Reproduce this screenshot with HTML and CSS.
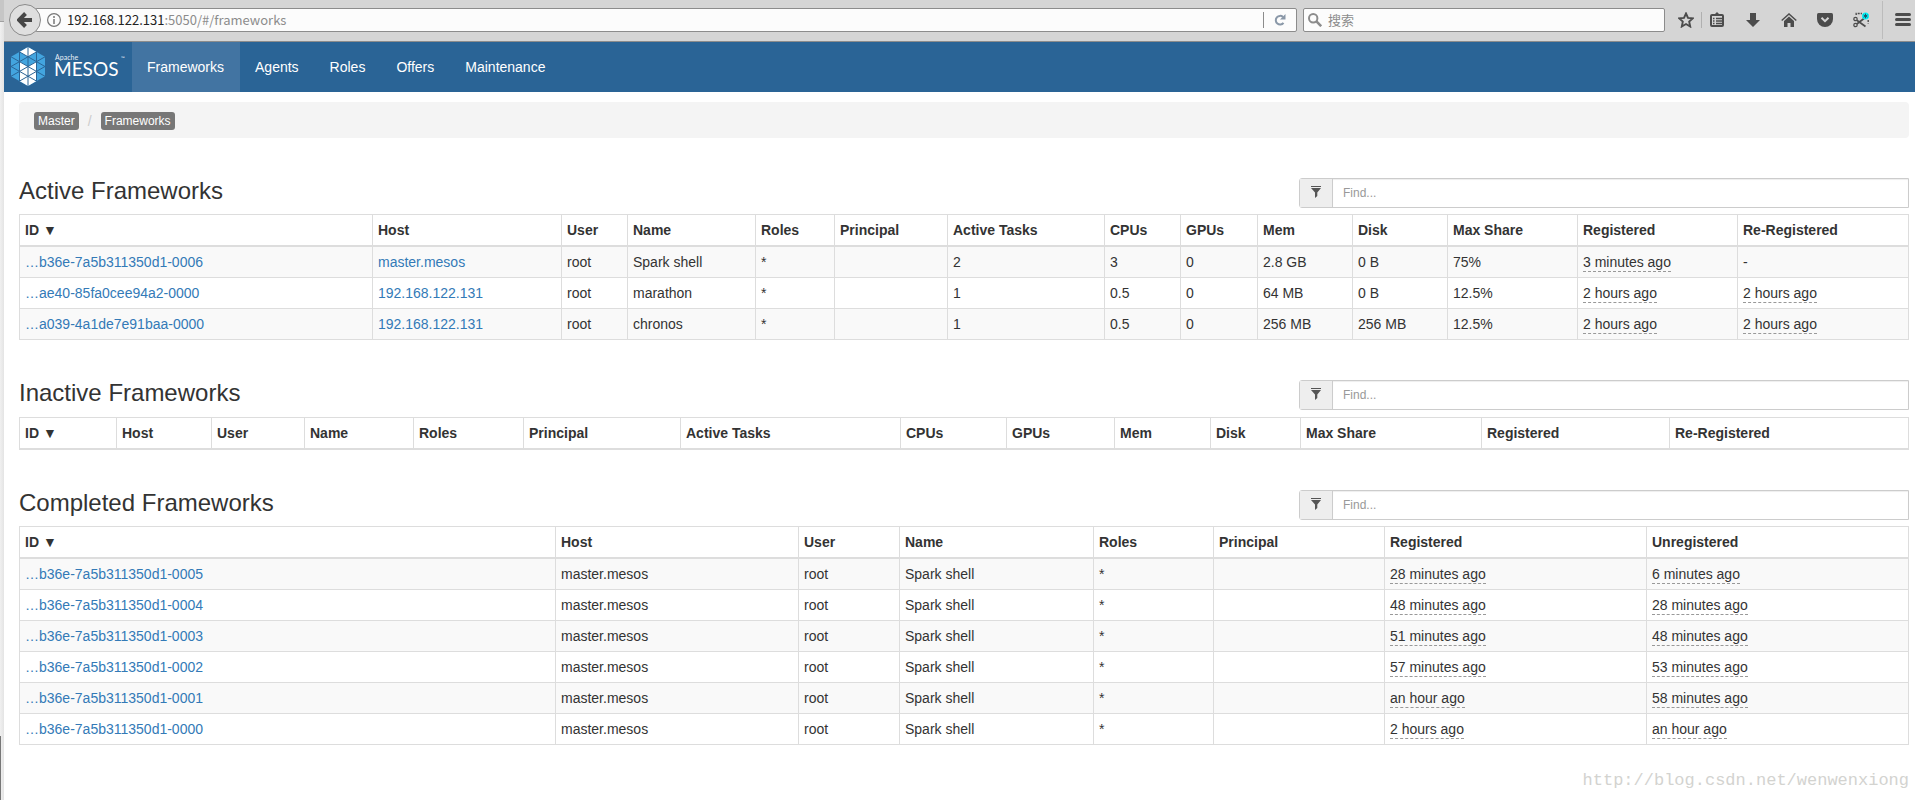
FILE: index.html
```
<!DOCTYPE html>
<html lang="en">
<head>
<meta charset="utf-8">
<title>Mesos Frameworks</title>
<link rel="stylesheet" href="styles.css">
</head>
<body>
<div class="window">
<aside class="edge"><div class="edge-top"></div><div class="edge-middle"></div><div class="edge-bottom"></div></aside>
<div class="browser">
<header class="toolbar">
  <button class="back" type="button" aria-label="Back"><svg width="16" height="16" viewBox="0 0 16 16"><path d="M8.500 1.500L2 8l6.500 6.500M2.500 8H15" fill="none" stroke="#474747" stroke-width="4"/></svg></button>
  <div class="address">
    <svg class="info" width="14" height="14" viewBox="0 0 14 14"><circle cx="7" cy="7" r="6.400" fill="none" stroke="#777" stroke-width="1.200"/><path d="M7 6v5M7 3v2" stroke="#777" stroke-width="1.500"/></svg>
    <span class="url"><span class="url-host">192.168.122.131</span>:5050/#/frameworks</span>
    <button class="reload" type="button" aria-label="Reload"><svg width="12" height="12" viewBox="0 0 12 12"><path d="M9.500 8.800A4.300 4.300 0 1 1 9 3" fill="none" stroke="#8a98a8" stroke-width="2"/><path d="M11.500 0v5.500H6z" fill="#8a98a8"/></svg></button>
  </div>
  <label class="search">
    <svg width="14" height="14" viewBox="0 0 14 14"><circle cx="5.200" cy="5.200" r="4.200" fill="none" stroke="#8c8c8c" stroke-width="2"/><path d="M8.200 8.200l5 5" stroke="#8c8c8c" stroke-width="2.600"/></svg>
    <input class="search-input" type="text" placeholder="搜索" aria-label="搜索">
  </label>
  <div class="tools">
    <button class="tool" type="button" aria-label="Bookmark"><svg width="16" height="16" viewBox="0 0 16 16"><path d="M8 1.500l2 4.400 4.700.5-3.500 3.200 1 4.900L8 12l-4.200 2.500 1-4.900L1.300 6.400 6 5.900z" fill="none" stroke="#4c4c4c" stroke-width="1.900"/></svg></button>
    <span class="divider"></span>
    <button class="tool" type="button" aria-label="Library"><svg width="14" height="16" viewBox="0 0 14 16"><path d="M7 0l3 3H4z" fill="#4c4c4c"/><rect x="1" y="3" width="12" height="11" rx="1" fill="none" stroke="#4c4c4c" stroke-width="2"/><path d="M3 6.500h1.500M6 6.500h6M3 9h1.500M6 9h6M3 11.500h1.500M6 11.500h6" stroke="#4c4c4c" stroke-width="1.400"/></svg></button>
    <button class="tool" type="button" aria-label="Downloads"><svg width="14" height="14" viewBox="0 0 14 14"><path d="M4 0h6v7h4l-7 7-7-7h4z" fill="#4c4c4c"/></svg></button>
    <button class="tool" type="button" aria-label="Home"><svg width="16" height="14" viewBox="0 0 16 14"><path d="M.7 7.500L8 1l7.300 6.500" fill="none" stroke="#4c4c4c" stroke-width="1.500"/><path d="M3 8l5-4.400L13 8v6H9.500v-4h-3v4H3z" fill="#4c4c4c"/></svg></button>
    <button class="tool" type="button" aria-label="Pocket"><svg width="16" height="14" viewBox="0 0 16 14"><path d="M1.500 0h13Q16 0 16 1.500V6a8 8 0 0 1-16 0V1.500Q0 0 1.500 0z" fill="#4c4c4c"/><path d="M4.500 4.800L8 8.200l3.500-3.400" fill="none" stroke="#d5d5d5" stroke-width="2"/></svg></button>
    <button class="tool" type="button" aria-label="Screenshot"><svg width="16" height="16" viewBox="0 0 16 16"><path d="M3.200 3V1.500H9M15.200 8v3.500" fill="none" stroke="#4c4c4c" stroke-width="1.400" stroke-dasharray="2 1"/><circle cx="2.500" cy="7" r="1.700" fill="none" stroke="#4c4c4c" stroke-width="1.200"/><circle cx="2.500" cy="13" r="1.700" fill="none" stroke="#4c4c4c" stroke-width="1.200"/><path d="M3.800 8.200L12.500 14.500M3.800 12L11 6.500" stroke="#4c4c4c" stroke-width="1.700"/><circle cx="12.500" cy="4" r="3.500" fill="#00f0f5"/><path d="M12.500 1.700v4.600M10.500 2.900l4 2.300M14.500 2.900l-4 2.300" stroke="#17576a" stroke-width="1"/></svg></button>
    <button class="tool tool-menu" type="button" aria-label="Menu"><svg width="16" height="13" viewBox="0 0 16 13"><path d="M1.500 1.500h13M1.500 6.500h13M1.500 11.500h13" stroke="#4c4c4c" stroke-width="3" stroke-linecap="round"/></svg></button>
  </div>
</header>
<nav class="navbar">
  <a class="brand" href="#" aria-label="Apache Mesos">
    <svg width="118" height="42" viewBox="0 0 118 42">
      <path d="M18 1l17 9.800v19.500L18 40 1 30.300V10.800z" fill="#43a5df"/>
      <path d="M18 1l8.500 4.900-8.500 4.900-8.500-4.900zM9.500 15.600l8.500 4.900 8.500-4.900v19.500L18 40l-8.500-4.900z" fill="#fff"/>
      <path d="M18 1v39M9.500 5.900v29.200M26.500 5.900v29.200M1 20.500L26.500 5.900M1 30.300L35 10.800M9.500 35.100L35 20.500M35 20.500L9.500 5.900M35 30.300L1 10.800M26.500 35.100L1 20.500" fill="none" stroke="#2a6496"/>
      <text class="brand-small" x="45" y="14">Apache</text><text class="brand-name" x="44" y="30">MESOS</text><text class="brand-mark" x="111" y="14">™</text>
    </svg>
  </a>
  <a class="nav-link nav-active" href="#">Frameworks</a><a class="nav-link" href="#">Agents</a><a class="nav-link" href="#">Roles</a><a class="nav-link" href="#">Offers</a><a class="nav-link" href="#">Maintenance</a>
</nav>
<main class="content">
  <div class="breadcrumb"><a class="badge" href="#">Master</a><span class="slash">/</span><a class="badge" href="#">Frameworks</a></div>
  <section class="panel">
    <div class="panel-head"><h2 class="title">Active Frameworks</h2>
      <label class="find"><span class="find-icon"><svg width="10" height="12" viewBox="0 0 10 12"><path d="M0 0h10v1H0zM0 2h10L6.300 6.500V10L4 12V6.500z" fill="#555"/></svg></span><input class="find-input" type="text" placeholder="Find..." aria-label="Find active frameworks"></label></div>
    <table class="grid">
      <colgroup><col class="w353"><col class="w189"><col class="w66"><col class="w128"><col class="w79"><col class="w113"><col class="w157"><col class="w76"><col class="w77"><col class="w95"><col class="w95"><col class="w130"><col class="w160"><col class="w171"></colgroup>
      <thead><tr><th>ID ▼</th><th>Host</th><th>User</th><th>Name</th><th>Roles</th><th>Principal</th><th>Active Tasks</th><th>CPUs</th><th>GPUs</th><th>Mem</th><th>Disk</th><th>Max Share</th><th>Registered</th><th>Re-Registered</th></tr></thead>
      <tbody>
        <tr><td><a href="#">…b36e-7a5b311350d1-0006</a></td><td><a href="#">master.mesos</a></td><td>root</td><td>Spark shell</td><td>*</td><td></td><td>2</td><td>3</td><td>0</td><td>2.8 GB</td><td>0 B</td><td>75%</td><td><span class="time">3 minutes ago</span></td><td>-</td></tr>
        <tr><td><a href="#">…ae40-85fa0cee94a2-0000</a></td><td><a href="#">192.168.122.131</a></td><td>root</td><td>marathon</td><td>*</td><td></td><td>1</td><td>0.5</td><td>0</td><td>64 MB</td><td>0 B</td><td>12.5%</td><td><span class="time">2 hours ago</span></td><td><span class="time">2 hours ago</span></td></tr>
        <tr><td><a href="#">…a039-4a1de7e91baa-0000</a></td><td><a href="#">192.168.122.131</a></td><td>root</td><td>chronos</td><td>*</td><td></td><td>1</td><td>0.5</td><td>0</td><td>256 MB</td><td>256 MB</td><td>12.5%</td><td><span class="time">2 hours ago</span></td><td><span class="time">2 hours ago</span></td></tr>
      </tbody>
    </table>
  </section>
  <section class="panel">
    <div class="panel-head"><h2 class="title">Inactive Frameworks</h2>
      <label class="find"><span class="find-icon"><svg width="10" height="12" viewBox="0 0 10 12"><path d="M0 0h10v1H0zM0 2h10L6.300 6.500V10L4 12V6.500z" fill="#555"/></svg></span><input class="find-input" type="text" placeholder="Find..." aria-label="Find inactive frameworks"></label></div>
    <table class="grid grid-empty">
      <colgroup><col class="w97"><col class="w95"><col class="w93"><col class="w109"><col class="w110"><col class="w157"><col class="w220"><col class="w106"><col class="w108"><col class="w96"><col class="w90"><col class="w181"><col class="w188"><col class="w239"></colgroup>
      <thead><tr><th>ID ▼</th><th>Host</th><th>User</th><th>Name</th><th>Roles</th><th>Principal</th><th>Active Tasks</th><th>CPUs</th><th>GPUs</th><th>Mem</th><th>Disk</th><th>Max Share</th><th>Registered</th><th>Re-Registered</th></tr></thead>
    </table>
  </section>
  <section class="panel">
    <div class="panel-head"><h2 class="title">Completed Frameworks</h2>
      <label class="find"><span class="find-icon"><svg width="10" height="12" viewBox="0 0 10 12"><path d="M0 0h10v1H0zM0 2h10L6.300 6.500V10L4 12V6.500z" fill="#555"/></svg></span><input class="find-input" type="text" placeholder="Find..." aria-label="Find completed frameworks"></label></div>
    <table class="grid">
      <colgroup><col class="w536"><col class="w243"><col class="w101"><col class="w194"><col class="w120"><col class="w171"><col class="w262"><col class="w262"></colgroup>
      <thead><tr><th>ID ▼</th><th>Host</th><th>User</th><th>Name</th><th>Roles</th><th>Principal</th><th>Registered</th><th>Unregistered</th></tr></thead>
      <tbody>
        <tr><td><a href="#">…b36e-7a5b311350d1-0005</a></td><td>master.mesos</td><td>root</td><td>Spark shell</td><td>*</td><td></td><td><span class="time">28 minutes ago</span></td><td><span class="time">6 minutes ago</span></td></tr>
        <tr><td><a href="#">…b36e-7a5b311350d1-0004</a></td><td>master.mesos</td><td>root</td><td>Spark shell</td><td>*</td><td></td><td><span class="time">48 minutes ago</span></td><td><span class="time">28 minutes ago</span></td></tr>
        <tr><td><a href="#">…b36e-7a5b311350d1-0003</a></td><td>master.mesos</td><td>root</td><td>Spark shell</td><td>*</td><td></td><td><span class="time">51 minutes ago</span></td><td><span class="time">48 minutes ago</span></td></tr>
        <tr><td><a href="#">…b36e-7a5b311350d1-0002</a></td><td>master.mesos</td><td>root</td><td>Spark shell</td><td>*</td><td></td><td><span class="time">57 minutes ago</span></td><td><span class="time">53 minutes ago</span></td></tr>
        <tr><td><a href="#">…b36e-7a5b311350d1-0001</a></td><td>master.mesos</td><td>root</td><td>Spark shell</td><td>*</td><td></td><td><span class="time">an hour ago</span></td><td><span class="time">58 minutes ago</span></td></tr>
        <tr><td><a href="#">…b36e-7a5b311350d1-0000</a></td><td>master.mesos</td><td>root</td><td>Spark shell</td><td>*</td><td></td><td><span class="time">2 hours ago</span></td><td><span class="time">an hour ago</span></td></tr>
      </tbody>
    </table>
  </section>
  <footer class="watermark">http://blog.csdn.net/wenwenxiong</footer>
</main>
</div>
</div>
</body>
</html>
```
FILE: styles.css
```
* { box-sizing: border-box; }
body { margin: 0; background: #fff; color: #333; font: 14px/20px "Liberation Sans", Arial, sans-serif; }
svg { display: block; flex: none; }
button { margin: 0; padding: 0; border: 0; background: none; }
a { color: #337ab7; text-decoration: none; }

.window { display: flex; min-height: 100vh; }
.edge { display: flex; flex-direction: column; width: 4px; background: linear-gradient(90deg, #f0f0f0, #e4e4e4); }
.edge-top { height: 22px; background: #c6c6c6; border-bottom: 1px solid #a0a0a0; }
.edge-middle { flex: 1; }
.edge-bottom { height: 64px; border-left: 1px solid #777; }
.browser { flex: 1; min-width: 0; }

.toolbar { display: flex; align-items: center; height: 42px; padding: 0 0 2px 5px; background: #d5d5d5; border-bottom: 1px solid #8c8c8c; }
.back { z-index: 1; display: flex; align-items: center; justify-content: center; flex: none; width: 32px; height: 32px; border: 1px solid #8a8a8a; border-radius: 50%; background: #dfdfdf; }
.address { display: flex; align-items: center; flex: 1; height: 24px; margin-left: -6px; padding-left: 11px; border: 1px solid #8c8c8c; border-radius: 2px; background: #fcfcfc; }
.url { flex: 1; margin-left: 6px; color: #8c8c8c; font: 13px/20px "Noto Sans CJK SC", sans-serif; }
.url-host { color: #222; }
.reload { display: flex; align-items: center; justify-content: center; width: 33px; height: 16px; border-left: 1px solid #8c8c8c; }
.search { display: flex; align-items: center; gap: 6px; width: 362px; height: 24px; margin-left: 6px; padding: 0 4px; border: 1px solid #8c8c8c; border-radius: 2px; background: #fcfcfc; }
.search-input { flex: 1; min-width: 0; padding: 0; border: 0; outline: 0; background: none; font: 13px/20px "Noto Sans CJK SC", sans-serif; }
.search-input::placeholder { color: #8c8c8c; }
.tools { display: flex; align-items: center; margin-left: 6px; }
.tool { display: flex; align-items: center; justify-content: center; width: 30px; height: 38px; margin-right: 6px; }
.tool:first-child { margin-right: 0; }
.divider { width: 1px; height: 16px; background: #b0b0b0; }
.tool-menu { justify-content: flex-end; width: 33px; margin: 0; padding-right: 4px; border-left: 1px solid #bcbcbc; }

.navbar { display: flex; height: 50px; background: #2a6496; }
.brand { width: 128px; padding: 4px 4px 4px 6px; }
.brand-small { fill: #e8f0f6; font: 7px Lato, sans-serif; }
.brand-name { fill: #fff; font: 19px Lato, sans-serif; }
.brand-mark { fill: #e8f0f6; font: 5px Lato, sans-serif; }
.nav-link { padding: 15px 16px 15px 15px; color: #fff; }
.nav-active { background: #4274a2; }

.content { padding: 10px 6px 0 15px; }
.breadcrumb { display: flex; align-items: center; height: 36px; padding: 1px 15px 0; border-radius: 4px; background: #f4f4f4; }
.badge { padding: 0 4px; border-radius: 3px; background: #777; color: #fff; font-size: 12px; line-height: 18px; }
.slash { padding: 0 9px; color: #ccc; }
.panel { margin-top: 40px; }
.panel-head { display: flex; justify-content: space-between; align-items: flex-start; margin-bottom: 6px; }
.title { margin: 0; font-size: 24px; font-weight: 400; line-height: 26px; }
.find { display: flex; width: 610px; height: 30px; border: 1px solid #ccc; border-radius: 3px 0 0 3px; }
.find-icon { display: flex; align-items: center; justify-content: center; width: 33px; padding-bottom: 2px; border-right: 1px solid #ccc; background: #eee; }
.find-input { flex: 1; min-width: 0; padding: 0 10px; border: 0; outline: 0; box-shadow: inset 0 1px 1px #eee; font: 12px/18px "Liberation Sans", Arial, sans-serif; }
.find-input::placeholder { color: #999; }

.grid { width: 100%; table-layout: fixed; border-collapse: collapse; border: 1px solid #ddd; }
.grid-empty { margin-top: 7px; }
.grid th, .grid td { height: 31px; padding: 5px; border: 1px solid #ddd; text-align: left; white-space: nowrap; }
.grid th { border-bottom-width: 2px; }
.grid tbody tr:nth-child(odd) { background: #f9f9f9; }
.time { padding-bottom: 1px; border-bottom: 1px dashed #999; }
.watermark { margin-top: 26px; text-align: right; color: #d3d3d0; font: 17px/20px "Liberation Mono", monospace; }

.w66 { width: 66px; } .w76 { width: 76px; } .w77 { width: 77px; } .w79 { width: 79px; }
.w90 { width: 90px; } .w93 { width: 93px; } .w95 { width: 95px; } .w96 { width: 96px; } .w97 { width: 97px; }
.w101 { width: 101px; } .w106 { width: 106px; } .w108 { width: 108px; } .w109 { width: 109px; } .w110 { width: 110px; }
.w113 { width: 113px; } .w120 { width: 120px; } .w128 { width: 128px; } .w130 { width: 130px; } .w157 { width: 157px; }
.w160 { width: 160px; } .w171 { width: 171px; } .w181 { width: 181px; } .w188 { width: 188px; } .w189 { width: 189px; }
.w194 { width: 194px; } .w220 { width: 220px; } .w239 { width: 239px; } .w243 { width: 243px; } .w262 { width: 262px; }
.w353 { width: 353px; } .w536 { width: 536px; }
```
